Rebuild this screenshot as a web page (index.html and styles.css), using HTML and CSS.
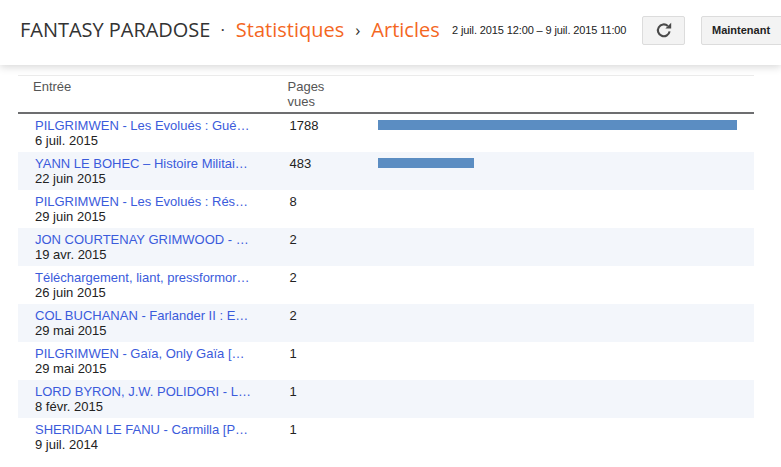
FILE: index.html
```html
<!DOCTYPE html>
<html lang="fr">
<head>
<meta charset="utf-8">
<title>Statistiques</title>
<link rel="stylesheet" href="styles.css">
</head>
<body>
<header class="topbar">
  <div class="crumbs">
    <span class="blog">FANTASY PARADOSE</span>
    <span class="sep dot">·</span>
    <span class="crumb">Statistiques</span>
    <span class="sep arrow">›</span>
    <span class="crumb">Articles</span>
  </div>
  <div class="range">2 juil. 2015 12:00 – 9 juil. 2015 11:00</div>
  <button class="btn refresh" aria-label="Actualiser">
    <svg width="18" height="18" viewBox="0 0 18 18"><path d="M14.6 10.4A5.9 5.9 0 1 1 12.8 5" fill="none" stroke="#4a4a4a" stroke-width="2.1"/><path d="M10.4 7.6h5.8V1.8z" fill="#4a4a4a"/></svg>
  </button>
  <button class="btn now">Maintenant</button>
</header>
<main class="content">
  <table class="stats">
    <thead>
      <tr><th class="c-entry">Entrée</th><th class="c-views">Pages<br>vues</th><th></th></tr>
    </thead>
    <tbody>
      <tr><td class="c-entry"><a>PILGRIMWEN - Les Evolués : Gué…</a><span>6 juil. 2015</span></td><td class="c-count">1788</td><td class="c-bar"><div class="bar" style="width:359px"></div></td></tr>
      <tr><td class="c-entry"><a>YANN LE BOHEC – Histoire Militai…</a><span>22 juin 2015</span></td><td class="c-count">483</td><td class="c-bar"><div class="bar" style="width:96px"></div></td></tr>
      <tr><td class="c-entry"><a>PILGRIMWEN - Les Evolués : Rés…</a><span>29 juin 2015</span></td><td class="c-count">8</td><td class="c-bar"></td></tr>
      <tr><td class="c-entry"><a>JON COURTENAY GRIMWOOD - …</a><span>19 avr. 2015</span></td><td class="c-count">2</td><td class="c-bar"></td></tr>
      <tr><td class="c-entry"><a>Téléchargement, liant, pressformor…</a><span>26 juin 2015</span></td><td class="c-count">2</td><td class="c-bar"></td></tr>
      <tr><td class="c-entry"><a>COL BUCHANAN - Farlander II : E…</a><span>29 mai 2015</span></td><td class="c-count">2</td><td class="c-bar"></td></tr>
      <tr><td class="c-entry"><a>PILGRIMWEN - Gaïa, Only Gaïa […</a><span>29 mai 2015</span></td><td class="c-count">1</td><td class="c-bar"></td></tr>
      <tr><td class="c-entry"><a>LORD BYRON, J.W. POLIDORI - L…</a><span>8 févr. 2015</span></td><td class="c-count">1</td><td class="c-bar"></td></tr>
      <tr><td class="c-entry"><a>SHERIDAN LE FANU - Carmilla [P…</a><span>9 juil. 2014</span></td><td class="c-count">1</td><td class="c-bar"></td></tr>
    </tbody>
  </table>
</main>
</body>
</html>
```
FILE: styles.css
```css
* { box-sizing: border-box; }
html, body { margin: 0; height: 100%; overflow: hidden; background: #fff; }
body { font-family: "Liberation Sans", Arial, sans-serif; font-size: 13px; color: #222; }

.topbar {
  height: 65px;
  display: flex;
  align-items: center;
  padding-left: 20px;
  white-space: nowrap;
  box-shadow: 0 2px 8px rgba(0,0,0,.16);
  background: #fff;
}
.crumbs { display: flex; align-items: center; font-family: "Open Sans", sans-serif; font-size: 20px; width: 432px; flex: none; margin-top: -7px; }
.blog { color: #333; letter-spacing: -.03px; }
.crumb { color: #f4671f; }
.sep { color: #333; font-size: 17px; }
.dot { margin: 0 11px 0 10px; }
.arrow { margin: 0 11px; }
.range { font-size: 11px; color: #222; width: 190px; flex: none; margin-top: -5px; letter-spacing: -.12px; }
.btn {
  height: 29px;
  margin-top: -5px;
  border: 1px solid #dcdcdc;
  border-radius: 2px;
  background: #f3f3f3;
  color: #222;
  flex: none;
  padding: 0;
  display: flex; align-items: center;
}
.refresh { width: 43px; justify-content: center; }
.now { width: 90px; margin-left: 16px; padding-left: 10px; font-family: "Liberation Sans", sans-serif; font-weight: bold; font-size: 11px; }

.content { padding: 10px 27px 0 18px; }
.stats { width: 736px; border-collapse: separate; border-spacing: 0; table-layout: fixed; }
.stats th {
  height: 39px;
  font-weight: normal;
  font-size: 13px;
  line-height: 15px;
  color: #555;
  text-align: left;
  vertical-align: top;
  padding: 3px 0 0;
  border-top: 1px solid #ebebeb;
  border-bottom: 2px solid #6d6e70;
}
.stats th.c-entry { width: 269.5px; padding-left: 15px; }
.stats th.c-views { width: 90.5px; }
.stats tbody tr { height: 38px; }
.stats tbody tr:nth-child(even) { background: #f3f6fb; }
.stats td { padding: 0; vertical-align: top; font-size: 13px; line-height: 15px; }
td.c-entry { padding: 4px 0 0 17px; }
td.c-entry a { display: block; white-space: nowrap; color: #3b5bdb; }
td.c-entry span { display: block; color: #222; }
td.c-count { padding: 4px 0 0 2px; color: #222; }
td.c-bar { padding-top: 6px; }
.bar { height: 10px; background: #5b8dc2; }
```
